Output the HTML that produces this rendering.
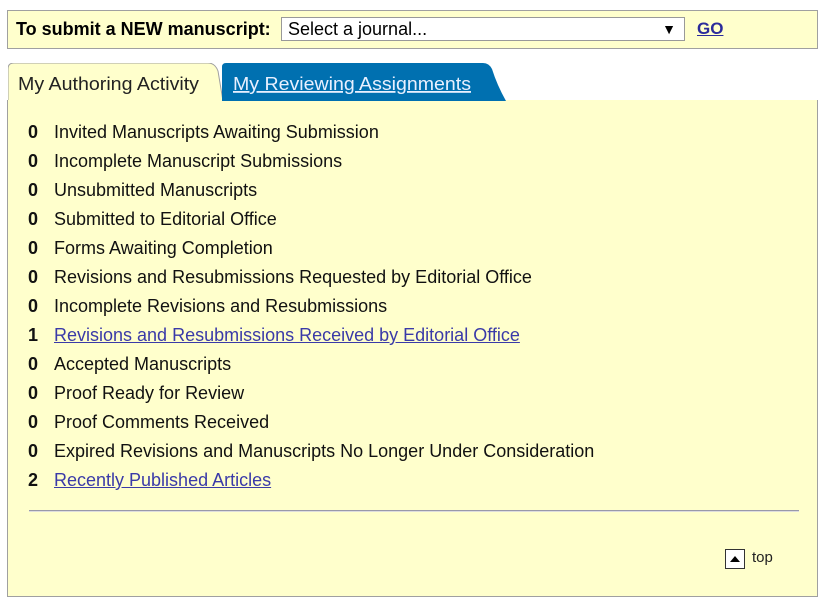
<!DOCTYPE html>
<html><head><style>
body{margin:0;background:#fff;font-family:"Liberation Sans",Arial,sans-serif;width:829px;height:606px;position:relative;overflow:hidden}
.top{position:absolute;left:7px;top:10px;width:809px;height:37px;background:#ffffcc;border:1px solid #a0a0a0}
.top b{position:absolute;left:8px;top:8px;font-size:18px;color:#000}
.sel{position:absolute;left:273px;top:6px;height:24px;background:#fff;border:1px solid #999;font-size:18px;line-height:23px;padding-left:6px;box-sizing:border-box;width:404px}
.sel span{position:absolute;right:8px;top:0;font-size:14px}
.go{position:absolute;left:689px;top:8px;font-size:17px;font-weight:bold;color:#2b2b9b;text-decoration:underline}
.main{position:absolute;left:7px;top:100px;width:809px;height:496px;background:#ffffcc;border:1px solid #a0a0a0;border-top:none}
.t1{position:absolute;left:8px;top:63px}
.t2{position:absolute;left:221px;top:63px}
.row{position:absolute;left:28px;font-size:18px;color:#111;height:20px;line-height:20px}
.row b{display:inline-block;width:26px}
.row a{color:#3a3aa8;text-decoration:underline}
</style></head><body>
<div class="top"><b>To submit a NEW manuscript:</b>
<div class="sel">Select a journal...<span>▼</span></div>
<span class="go">GO</span></div>
<div class="main"></div>
<svg class="t1" width="216" height="40"><path d="M0 38 V6 Q0 0 6 0 H200 Q207 0 210 8 L215 38 Z" fill="#ffffcc" stroke="#a0a0a0"/><rect x="0" y="37" width="216" height="3" fill="#ffffcc"/><text x="10" y="27" font-family="Liberation Sans" font-size="18" fill="#222" textLength="181" lengthAdjust="spacingAndGlyphs">My Authoring Activity</text></svg>
<svg class="t2" width="290" height="40"><path d="M1 38 V4 Q1 0 5 0 H262 Q268 0 271 6 Q276 22 285 38 Z" fill="#0070b0"/><text x="12" y="27" font-family="Liberation Sans" font-size="18" fill="#e8f0ff" text-decoration="underline" textLength="238" lengthAdjust="spacingAndGlyphs">My Reviewing Assignments</text></svg>
<div class="row" style="top:122px"><b>0</b>Invited Manuscripts Awaiting Submission</div>
<div class="row" style="top:151px"><b>0</b>Incomplete Manuscript Submissions</div>
<div class="row" style="top:180px"><b>0</b>Unsubmitted Manuscripts</div>
<div class="row" style="top:209px"><b>0</b>Submitted to Editorial Office</div>
<div class="row" style="top:238px"><b>0</b>Forms Awaiting Completion</div>
<div class="row" style="top:267px"><b>0</b>Revisions and Resubmissions Requested by Editorial Office</div>
<div class="row" style="top:296px"><b>0</b>Incomplete Revisions and Resubmissions</div>
<div class="row" style="top:325px"><b>1</b><a>Revisions and Resubmissions Received by Editorial Office</a></div>
<div class="row" style="top:354px"><b>0</b>Accepted Manuscripts</div>
<div class="row" style="top:383px"><b>0</b>Proof Ready for Review</div>
<div class="row" style="top:412px"><b>0</b>Proof Comments Received</div>
<div class="row" style="top:441px"><b>0</b>Expired Revisions and Manuscripts No Longer Under Consideration</div>
<div class="row" style="top:470px"><b>2</b><a>Recently Published Articles</a></div>
<div style="position:absolute;left:29px;top:510px;width:770px;height:1px;background:#9999aa;border-bottom:1px solid #ddd"></div>
<svg style="position:absolute;left:725px;top:549px" width="20" height="20"><rect x="0.5" y="0.5" width="19" height="19" fill="#fff" stroke="#333"/><path d="M5 13 L10 7 L15 13 Z" fill="#000"/></svg>
<div style="position:absolute;left:752px;top:549px;font-size:15px;color:#222">top</div>
</body></html>
